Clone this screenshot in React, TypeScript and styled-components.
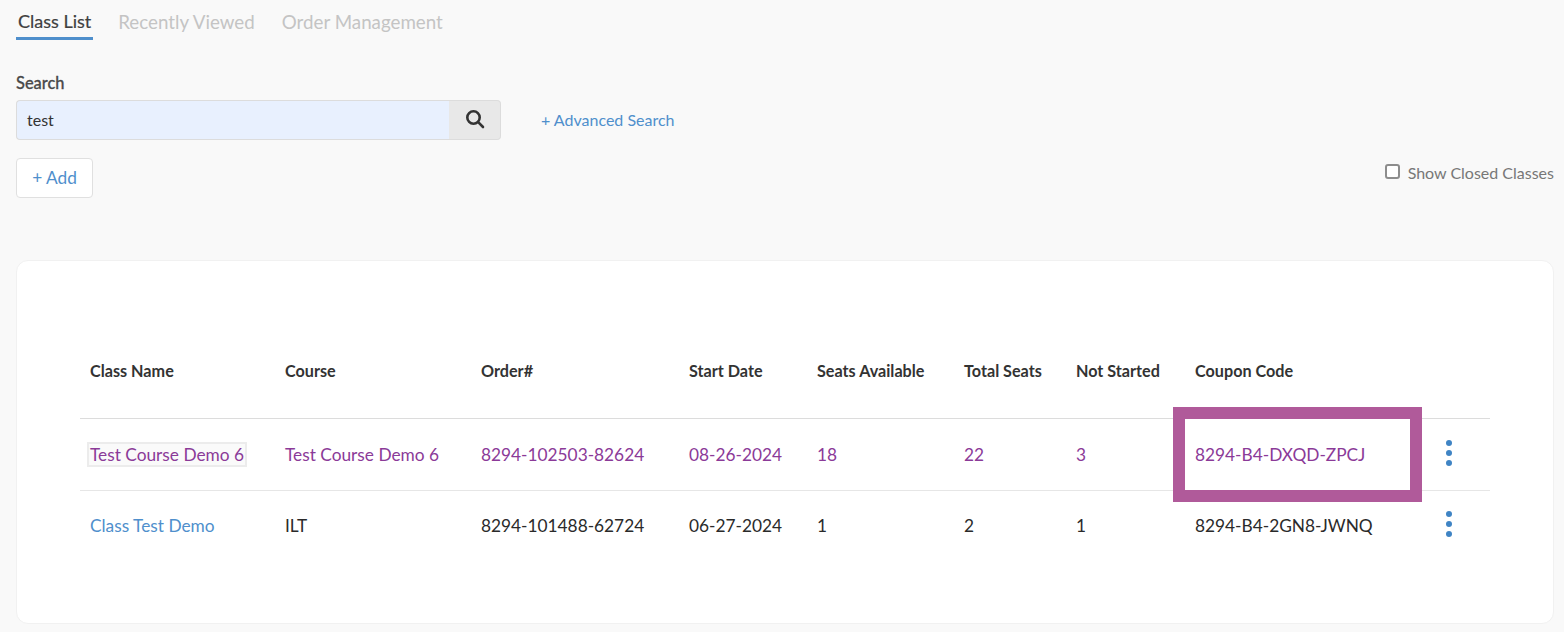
import React from "react";
import styled, { createGlobalStyle } from "styled-components";

const Global = createGlobalStyle`
  html, body { margin: 0; padding: 0; background: #f9f9f9; }
  body { font-family: Lato, "Open Sans", "Liberation Sans", sans-serif; color: #212121; overflow: hidden; }
  * { box-sizing: border-box; }
`;

const Page = styled.div`
  width: 1564px;
  height: 632px;
  padding: 0 10px 0 16px;
  overflow: hidden;
`;

const Tabs = styled.nav`
  display: flex;
  gap: 23px;
  height: 40px;
  align-items: flex-start;
`;

const Tab = styled.a<{ $active?: boolean }>`
  display: block;
  height: 40px;
  padding: 11px 2px 0;
  font-size: ${(p) => (p.$active ? "18px" : "18.75px")};
  line-height: 21px;
  color: ${(p) => (p.$active ? "#3f3f3f" : "#c4c4c4")};
  -webkit-text-stroke: ${(p) => (p.$active ? "0.2px #3f3f3f" : "0")};
  border-bottom: 3px solid ${(p) => (p.$active ? "#4f8fcc" : "transparent")};
`;

const SearchLabel = styled.label`
  display: block;
  margin-top: 34px;
  font-size: 16.4px;
  line-height: 18px;
  font-weight: 500;
  color: #4a4a4a;
  -webkit-text-stroke: 0.3px #4a4a4a;
`;

const SearchRow = styled.div`
  display: flex;
  align-items: center;
  margin-top: 8px;
`;

const SearchInput = styled.div`
  width: 433px;
  height: 40px;
  padding: 0 10px 2px;
  display: flex;
  align-items: center;
  font-size: 16px;
  color: #333;
  background: #e8f0fe;
  border: 1px solid #dcdcdc;
  border-right: 0;
  border-radius: 4px 0 0 4px;
`;

const SearchButton = styled.button`
  width: 52px;
  height: 40px;
  display: flex;
  align-items: center;
  justify-content: center;
  padding: 0 0 2px;
  background: #e8e8e8;
  border: 1px solid #dcdcdc;
  border-left: 0;
  border-radius: 0 4px 4px 0;
`;

const AdvancedLink = styled.a`
  margin-left: 40px;
  padding-bottom: 2px;
  font-size: 16px;
  color: #4f8fcc;
`;

const ActionRow = styled.div`
  display: flex;
  justify-content: space-between;
  align-items: flex-start;
  margin-top: 18px;
`;

const AddButton = styled.button`
  width: 77px;
  height: 40px;
  padding: 0 0 1px;
  font-family: inherit;
  font-size: 17.3px;
  color: #4f8fcc;
  background: #fff;
  border: 1px solid #e0e0e0;
  border-radius: 4px;
`;

const ClosedToggle = styled.label`
  display: flex;
  align-items: flex-start;
  gap: 8px;
  padding-top: 6px;
  font-size: 16px;
  line-height: 18px;
  color: #777;
`;

const CheckBox = styled.span`
  width: 15px;
  height: 15px;
  background: #fff;
  border: 2px solid #8d8d8d;
  border-radius: 3px;
`;

const ClosedText = styled.span``;

const Card = styled.section`
  position: relative;
  width: 1538px;
  height: 364px;
  margin-top: 62px;
  padding: 87px 64px 0 63px;
  background: #fff;
  border: 1px solid #f1f1f1;
  border-radius: 12px;
`;

const Table = styled.table`
  width: 1410px;
  table-layout: fixed;
  border-collapse: collapse;
`;

const HeadCell = styled.th<{ $w: number }>`
  width: ${(p) => p.$w}px;
  height: 70px;
  padding: 0 10px 25px;
  text-align: left;
  vertical-align: middle;
  font-size: 16.2px;
  font-weight: 700;
  color: #333;
  white-space: nowrap;
  border-bottom: 1px solid #dcdcdc;
`;

const Row = styled.tr`
  border-bottom: 1px solid #e6e6e6;
  &:last-child { border-bottom: 0; }
`;

const Cell = styled.td<{ $visited?: boolean; $link?: boolean }>`
  height: 72px;
  padding: 0 10px;
  font-size: 17.3px;
  white-space: nowrap;
  color: ${(p) => (p.$visited ? "#8b3a98" : p.$link ? "#4f8fcc" : "#2a2a2a")};
  tr:last-child > & { padding-bottom: 2px; }
`;

const FocusLink = styled.span`
  display: inline-block;
  margin: 0 -1px;
  padding: 0 1px;
  outline: 2px solid #ececec;
  background: #fafafa;
`;

const MenuButton = styled.span`
  display: flex;
  flex-direction: column;
  gap: 4px;
  width: 7px;
  margin-top: -3px;
  & > i {
    display: block;
    width: 6px;
    height: 6px;
    border-radius: 50%;
    background: #3f84c4;
  }
`;

const Highlight = styled.div`
  position: absolute;
  left: 1156px;
  top: 146px;
  width: 249px;
  height: 95px;
  border: 12px solid #b05a9a;
  pointer-events: none;
`;

const columns: [string, number][] = [
  ["Class Name", 195],
  ["Course", 196],
  ["Order#", 208],
  ["Start Date", 128],
  ["Seats Available", 147],
  ["Total Seats", 112],
  ["Not Started", 119],
  ["Coupon Code", 251],
  ["", 54],
];

const Kebab = () => (
  <MenuButton>
    <i />
    <i />
    <i />
  </MenuButton>
);

const SearchIcon = () => (
  <svg width="20" height="20" viewBox="0 0 20 20" fill="none" stroke="#333" strokeWidth="2.6" strokeLinecap="round">
    <circle cx="8.5" cy="8.5" r="6.2" />
    <path d="M13.2 13.2 L18 18" />
  </svg>
);

export default function App() {
  return (
    <Page>
      <Global />
      <Tabs>
        <Tab $active>Class List</Tab>
        <Tab>Recently Viewed</Tab>
        <Tab>Order Management</Tab>
      </Tabs>
      <SearchLabel>Search</SearchLabel>
      <SearchRow>
        <SearchInput>test</SearchInput>
        <SearchButton aria-label="Search">
          <SearchIcon />
        </SearchButton>
        <AdvancedLink>+ Advanced Search</AdvancedLink>
      </SearchRow>
      <ActionRow>
        <AddButton>+ Add</AddButton>
        <ClosedToggle>
          <CheckBox />
          <ClosedText>Show Closed Classes</ClosedText>
        </ClosedToggle>
      </ActionRow>
      <Card>
        <Table>
          <thead>
            <tr>
              {columns.map(([name, w], i) => (
                <HeadCell key={i} $w={w}>
                  {name}
                </HeadCell>
              ))}
            </tr>
          </thead>
          <tbody>
            <Row>
              <Cell $visited>
                <FocusLink>Test Course Demo 6</FocusLink>
              </Cell>
              <Cell $visited>Test Course Demo 6</Cell>
              <Cell $visited>8294-102503-82624</Cell>
              <Cell $visited>08-26-2024</Cell>
              <Cell $visited>18</Cell>
              <Cell $visited>22</Cell>
              <Cell $visited>3</Cell>
              <Cell $visited>8294-B4-DXQD-ZPCJ</Cell>
              <Cell>
                <Kebab />
              </Cell>
            </Row>
            <Row>
              <Cell $link>Class Test Demo</Cell>
              <Cell>ILT</Cell>
              <Cell>8294-101488-62724</Cell>
              <Cell>06-27-2024</Cell>
              <Cell>1</Cell>
              <Cell>2</Cell>
              <Cell>1</Cell>
              <Cell>8294-B4-2GN8-JWNQ</Cell>
              <Cell>
                <Kebab />
              </Cell>
            </Row>
          </tbody>
        </Table>
        <Highlight />
      </Card>
    </Page>
  );
}
